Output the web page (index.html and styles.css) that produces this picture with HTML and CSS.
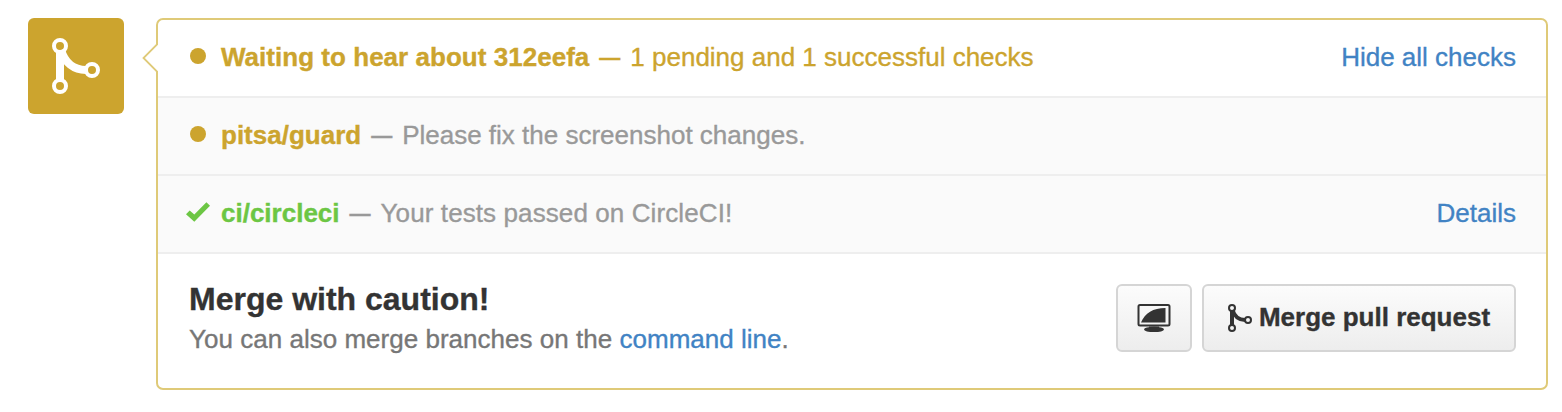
FILE: index.html
```html
<!DOCTYPE html>
<html lang="en">
<head>
<meta charset="utf-8">
<title>Merge pull request</title>
<link rel="stylesheet" href="styles.css">
</head>
<body>
<svg width="0" height="0" class="defs" aria-hidden="true">
  <symbol id="merge" viewBox="0 0 48 56">
    <g fill="none" stroke="currentColor">
      <path stroke-width="8" d="M8 14V42M9 12C13 25 22 32 34 32"/>
      <circle cx="8" cy="8" r="6" stroke-width="4"/>
      <circle cx="8" cy="48" r="6" stroke-width="4"/>
      <circle cx="40" cy="32" r="6" stroke-width="4"/>
    </g>
  </symbol>
</svg>
<main class="merge-area">
  <div class="state-icon"><svg class="state-glyph"><use href="#merge"/></svg></div>
  <section class="panel">
    <svg class="pointer" viewBox="0 0 16 32"><path d="M16 1.5L1.5 16L16 30.5" fill="#fff" stroke="#dfca78" stroke-width="1.8"/></svg>
    <div class="row pending">
      <span class="status"><i class="dot"></i></span>
      <p class="message"><strong class="title">Waiting to hear about 312eefa</strong><span class="dash">—</span><span class="summary">1 pending and 1 successful checks</span></p>
      <a class="link hide">Hide all checks</a>
    </div>
    <div class="row check pending">
      <span class="status"><i class="dot"></i></span>
      <p class="message"><strong class="guard">pitsa/guard</strong><span class="dash muted">—</span><span class="muted desc-guard">Please fix the screenshot changes.</span></p>
    </div>
    <div class="row check success">
      <span class="status"><svg class="tick" viewBox="0 0 24 20"><path d="M0 12.300L3.700 8.500L8.300 12.500L20.400.2L24 3.700L8.300 19.700Z" fill="currentColor"/></svg></span>
      <p class="message"><strong class="circle">ci/circleci</strong><span class="dash muted">—</span><span class="muted desc-circle">Your tests passed on CircleCI!</span></p>
      <a class="link details">Details</a>
    </div>
    <div class="actions">
      <div class="copy">
        <h2 class="heading">Merge with caution!</h2>
        <p class="hint">You can also merge branches on the <a class="link">command line</a>.</p>
      </div>
      <button class="button desktop" aria-label="Open in desktop"><svg class="monitor" viewBox="0 0 34 28"><rect x="1.500" y="1" width="31" height="20.500" rx="1.500" fill="none" stroke="currentColor" stroke-width="2"/><path d="M4 18.500C8 9 16 4 28.500 4V18.500ZM12 22.500H22V25H12Z" fill="currentColor"/><ellipse cx="17" cy="25.500" rx="10" ry="2.700" fill="currentColor"/></svg></button>
      <button class="button merge"><svg class="merge-glyph"><use href="#merge"/></svg><span class="label">Merge pull request</span></button>
    </div>
  </section>
</main>
</body>
</html>
```
FILE: styles.css
```css
* { box-sizing: border-box; }
body { margin: 0; background: #fff; font: 26px/36px "Liberation Sans", Arial, sans-serif; color: #777; -webkit-text-stroke: .35px currentColor; }
p, h2 { margin: 0; }
.defs { position: absolute; }
.merge-area { display: flex; gap: 32px; padding: 18px 14px 22px 28px; }
.state-icon { display: flex; flex: none; width: 96px; height: 96px; padding: 20px 24px; border-radius: 6px; background: #cca42e; color: #fff; }
.state-glyph { width: 48px; height: 56px; }
.panel { position: relative; flex: 1; height: 372px; border: 2px solid #dfca78; border-radius: 7px; background: #fff; }
.pointer { position: absolute; left: -16px; top: 22px; width: 16px; height: 32px; }
.row { display: flex; align-items: center; height: 78px; padding: 0 30px 2px 27px; border-bottom: 2px solid #eee; }
.check { background: #fafafa; }
.pending { color: #cca42e; }
.success { color: #6cc644; }
.status { display: flex; flex: none; width: 26px; margin-right: 10px; padding-bottom: 2px; justify-content: center; }
.dot { width: 16px; height: 16px; border-radius: 50%; background: currentColor; }
.tick { width: 24px; height: 20px; }
.message { flex: 1; display: flex; white-space: nowrap; }
.title { letter-spacing: .03px; }
.dash { width: 22px; margin: 0 9px 0 10px; font-size: 21px; font-weight: bold; }
.desc-circle { letter-spacing: .1px; }
.muted { color: #999; }
.link { color: #4183c4; white-space: nowrap; }
.actions { display: flex; height: 134px; padding: 30px 30px 0 31px; }
.copy { flex: 1; white-space: nowrap; }
.heading { font-size: 32px; line-height: 36px; color: #333; margin-top: -3px; }
.hint { margin-top: 4px; letter-spacing: .02px; }
.button { display: flex; align-items: center; justify-content: center; height: 68px; padding: 0; border: 2px solid #d5d5d5; border-radius: 6px; background: linear-gradient(#fcfcfc, #ededed); color: #333; font: bold 26px/36px "Liberation Sans", Arial, sans-serif; white-space: nowrap; }
.desktop { width: 76px; margin-right: 10px; }
.monitor { width: 34px; height: 28px; }
.merge { width: 314px; gap: 7px; }
.merge-glyph { width: 24px; height: 28px; }
.label { padding-bottom: 2px; }
```
